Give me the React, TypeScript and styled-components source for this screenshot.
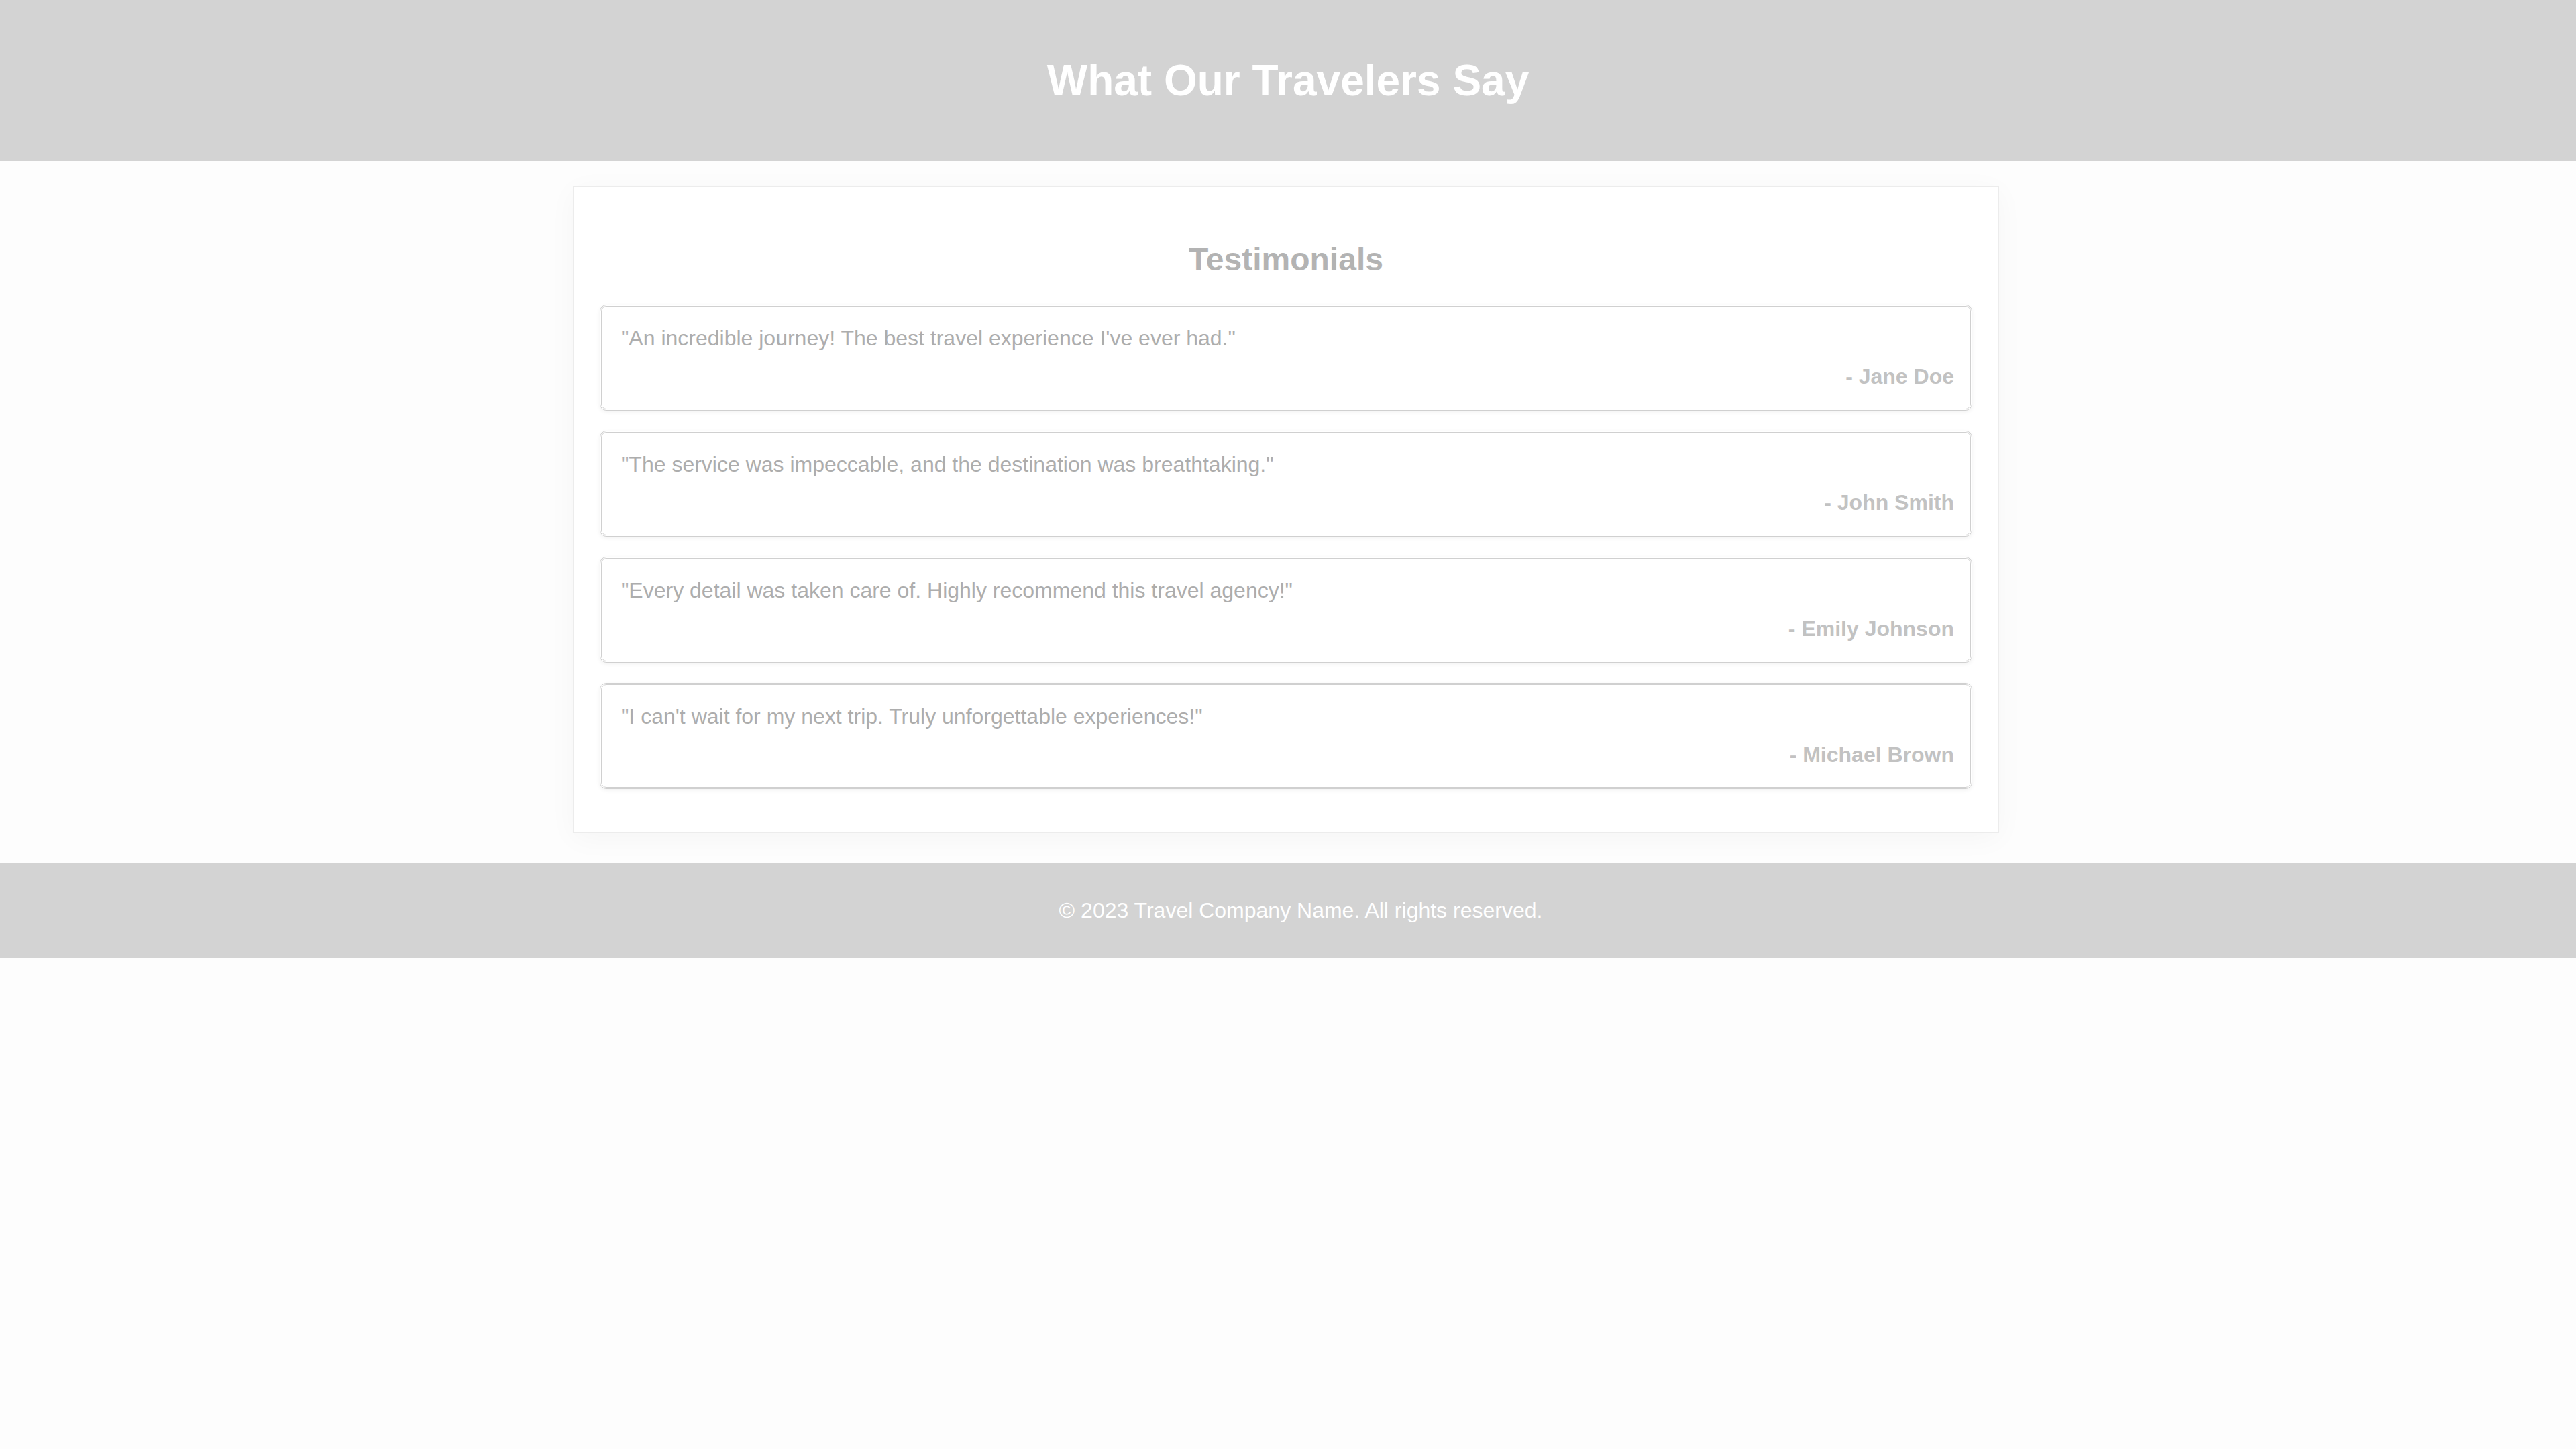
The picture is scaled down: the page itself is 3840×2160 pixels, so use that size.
import React from "react";
import styled, { createGlobalStyle } from "styled-components";

const GlobalStyle = createGlobalStyle`
  html, body {
    margin: 0;
    padding: 0;
    background: #fdfdfd;
    font-family: "Liberation Sans", Arial, sans-serif;
    overflow-x: hidden;
  }
`;

const Header = styled.header`
  background: #d3d3d3;
  height: 240px;
  display: flex;
  align-items: center;
  justify-content: center;
`;

const Title = styled.h1`
  margin: 0;
  color: #ffffff;
  font-size: 64px;
  font-weight: 700;
  line-height: 74px;
`;

const Main = styled.main`
  display: flex;
  justify-content: center;
  padding: 37px 6px 44px 0;
`;

const Card = styled.section`
  width: 2126px;
  box-sizing: border-box;
  background: #ffffff;
  border: 2px solid #ececec;
  padding: 38px 38px 34px;
  box-shadow: 0 8px 40px rgba(0, 0, 0, 0.035);
`;

const SectionTitle = styled.h2`
  margin: 42px 0 40px;
  text-align: center;
  color: #b3b3b3;
  font-size: 48px;
  font-weight: 700;
  line-height: 55px;
`;

const Quote = styled.article`
  border: 3px double #d0d0d0;
  border-radius: 10px;
  padding: 29px 30px 29px 29px;
  margin-bottom: 30px;
  background: #ffffff;
  box-shadow: 0 2px 6px rgba(0, 0, 0, 0.06);
  display: flex;
  flex-direction: column;
  gap: 20px;
`;

const QuoteText = styled.p`
  margin: 0;
  color: #adadad;
  font-size: 32px;
  line-height: 37px;
`;

const Author = styled.p`
  margin: 0 -6px 0 0;
  text-align: right;
  color: #c2c2c2;
  font-size: 32px;
  font-weight: 700;
  line-height: 37px;
`;

const Footer = styled.footer`
  background: #d3d3d3;
  height: 142px;
  display: flex;
  align-items: center;
  justify-content: center;
  padding-left: 38px;
`;

const FooterText = styled.p`
  margin: 0;
  color: #ffffff;
  font-size: 32px;
  line-height: 37px;
`;

const testimonials = [
  { text: "\"An incredible journey! The best travel experience I've ever had.\"", author: "- Jane Doe" },
  { text: "\"The service was impeccable, and the destination was breathtaking.\"", author: "- John Smith" },
  { text: "\"Every detail was taken care of. Highly recommend this travel agency!\"", author: "- Emily Johnson" },
  { text: "\"I can't wait for my next trip. Truly unforgettable experiences!\"", author: "- Michael Brown" },
];

export default function App() {
  return (
    <>
      <GlobalStyle />
      <Header>
        <Title>What Our Travelers Say</Title>
      </Header>
      <Main>
        <Card>
          <SectionTitle>Testimonials</SectionTitle>
          {testimonials.map((t) => (
            <Quote key={t.author}>
              <QuoteText>{t.text}</QuoteText>
              <Author>{t.author}</Author>
            </Quote>
          ))}
        </Card>
      </Main>
      <Footer>
        <FooterText>© 2023 Travel Company Name. All rights reserved.</FooterText>
      </Footer>
    </>
  );
}
